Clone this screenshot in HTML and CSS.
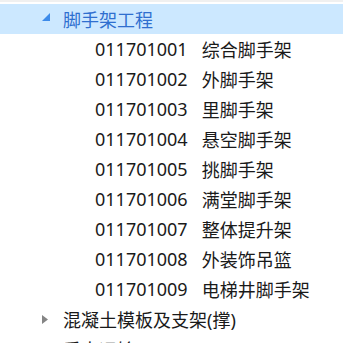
FILE: index.html
```html
<!DOCTYPE html>
<html lang="zh-CN">
<head>
    <meta charset="UTF-8">
    <title>清单项目</title>
    <link rel="stylesheet" href="styles.css">
</head>
<body>
    <div class="top-strip"></div>

    <!-- 清单树 -->
    <ul class="tree">
        <li class="node selected">
            <span class="toggle open">
                <svg width="8" height="8" viewBox="0 0 8 8"><path d="M8 0 L8 8 L0 8 Z" fill="#3d8bea"/></svg>
            </span>
            <span class="label">脚手架工程</span>
        </li>
        <li class="leaf"><span class="code">011701001</span><span class="name">综合脚手架</span></li>
        <li class="leaf"><span class="code">011701002</span><span class="name">外脚手架</span></li>
        <li class="leaf"><span class="code">011701003</span><span class="name">里脚手架</span></li>
        <li class="leaf"><span class="code">011701004</span><span class="name">悬空脚手架</span></li>
        <li class="leaf"><span class="code">011701005</span><span class="name">挑脚手架</span></li>
        <li class="leaf"><span class="code">011701006</span><span class="name">满堂脚手架</span></li>
        <li class="leaf"><span class="code">011701007</span><span class="name">整体提升架</span></li>
        <li class="leaf"><span class="code">011701008</span><span class="name">外装饰吊篮</span></li>
        <li class="leaf"><span class="code">011701009</span><span class="name">电梯井脚手架</span></li>
        <li class="node">
            <span class="toggle">
                <svg width="6" height="9" viewBox="0 0 6 9"><path d="M0 0 L6 4.5 L0 9 Z" fill="#858585"/></svg>
            </span>
            <span class="label">混凝土模板及支架(撑)</span>
        </li>
        <li class="node">
            <span class="toggle">
                <svg width="6" height="9" viewBox="0 0 6 9"><path d="M0 0 L6 4.5 L0 9 Z" fill="#858585"/></svg>
            </span>
            <span class="label">垂直运输</span>
        </li>
    </ul>
</body>
</html>
```
FILE: styles.css
```css
html, body {
    margin: 0;
    background: #fff;
    overflow: hidden;
}
body {
    font-family: "Noto Sans", "Noto Sans CJK SC", sans-serif;
    font-size: 18px;
    color: #1a1a1a;
}
.top-strip {
    height: 2px;
    background-color: #f0f0f0;
    margin-bottom: 2px;
}
.tree {
    list-style: none;
    margin: 0;
    padding: 0;
}
.tree li {
    height: 30px;
    display: flex;
    align-items: center;
    white-space: nowrap;
}
.node {
    padding-left: 39px;
}
.node.selected {
    background-color: #cce8ff;
}
.node.selected .label {
    color: #2f6fcf;
}
.toggle {
    width: 11px;
    height: 12px;
    margin-right: 13px;
    display: flex;
    align-items: center;
    justify-content: center;
}
.toggle.open {
    align-items: flex-end;
    justify-content: flex-end;
    padding-bottom: 4px;
    height: 8px;
}
.leaf {
    padding-left: 95px;
}
.name {
    margin-left: 14px;
}
```
